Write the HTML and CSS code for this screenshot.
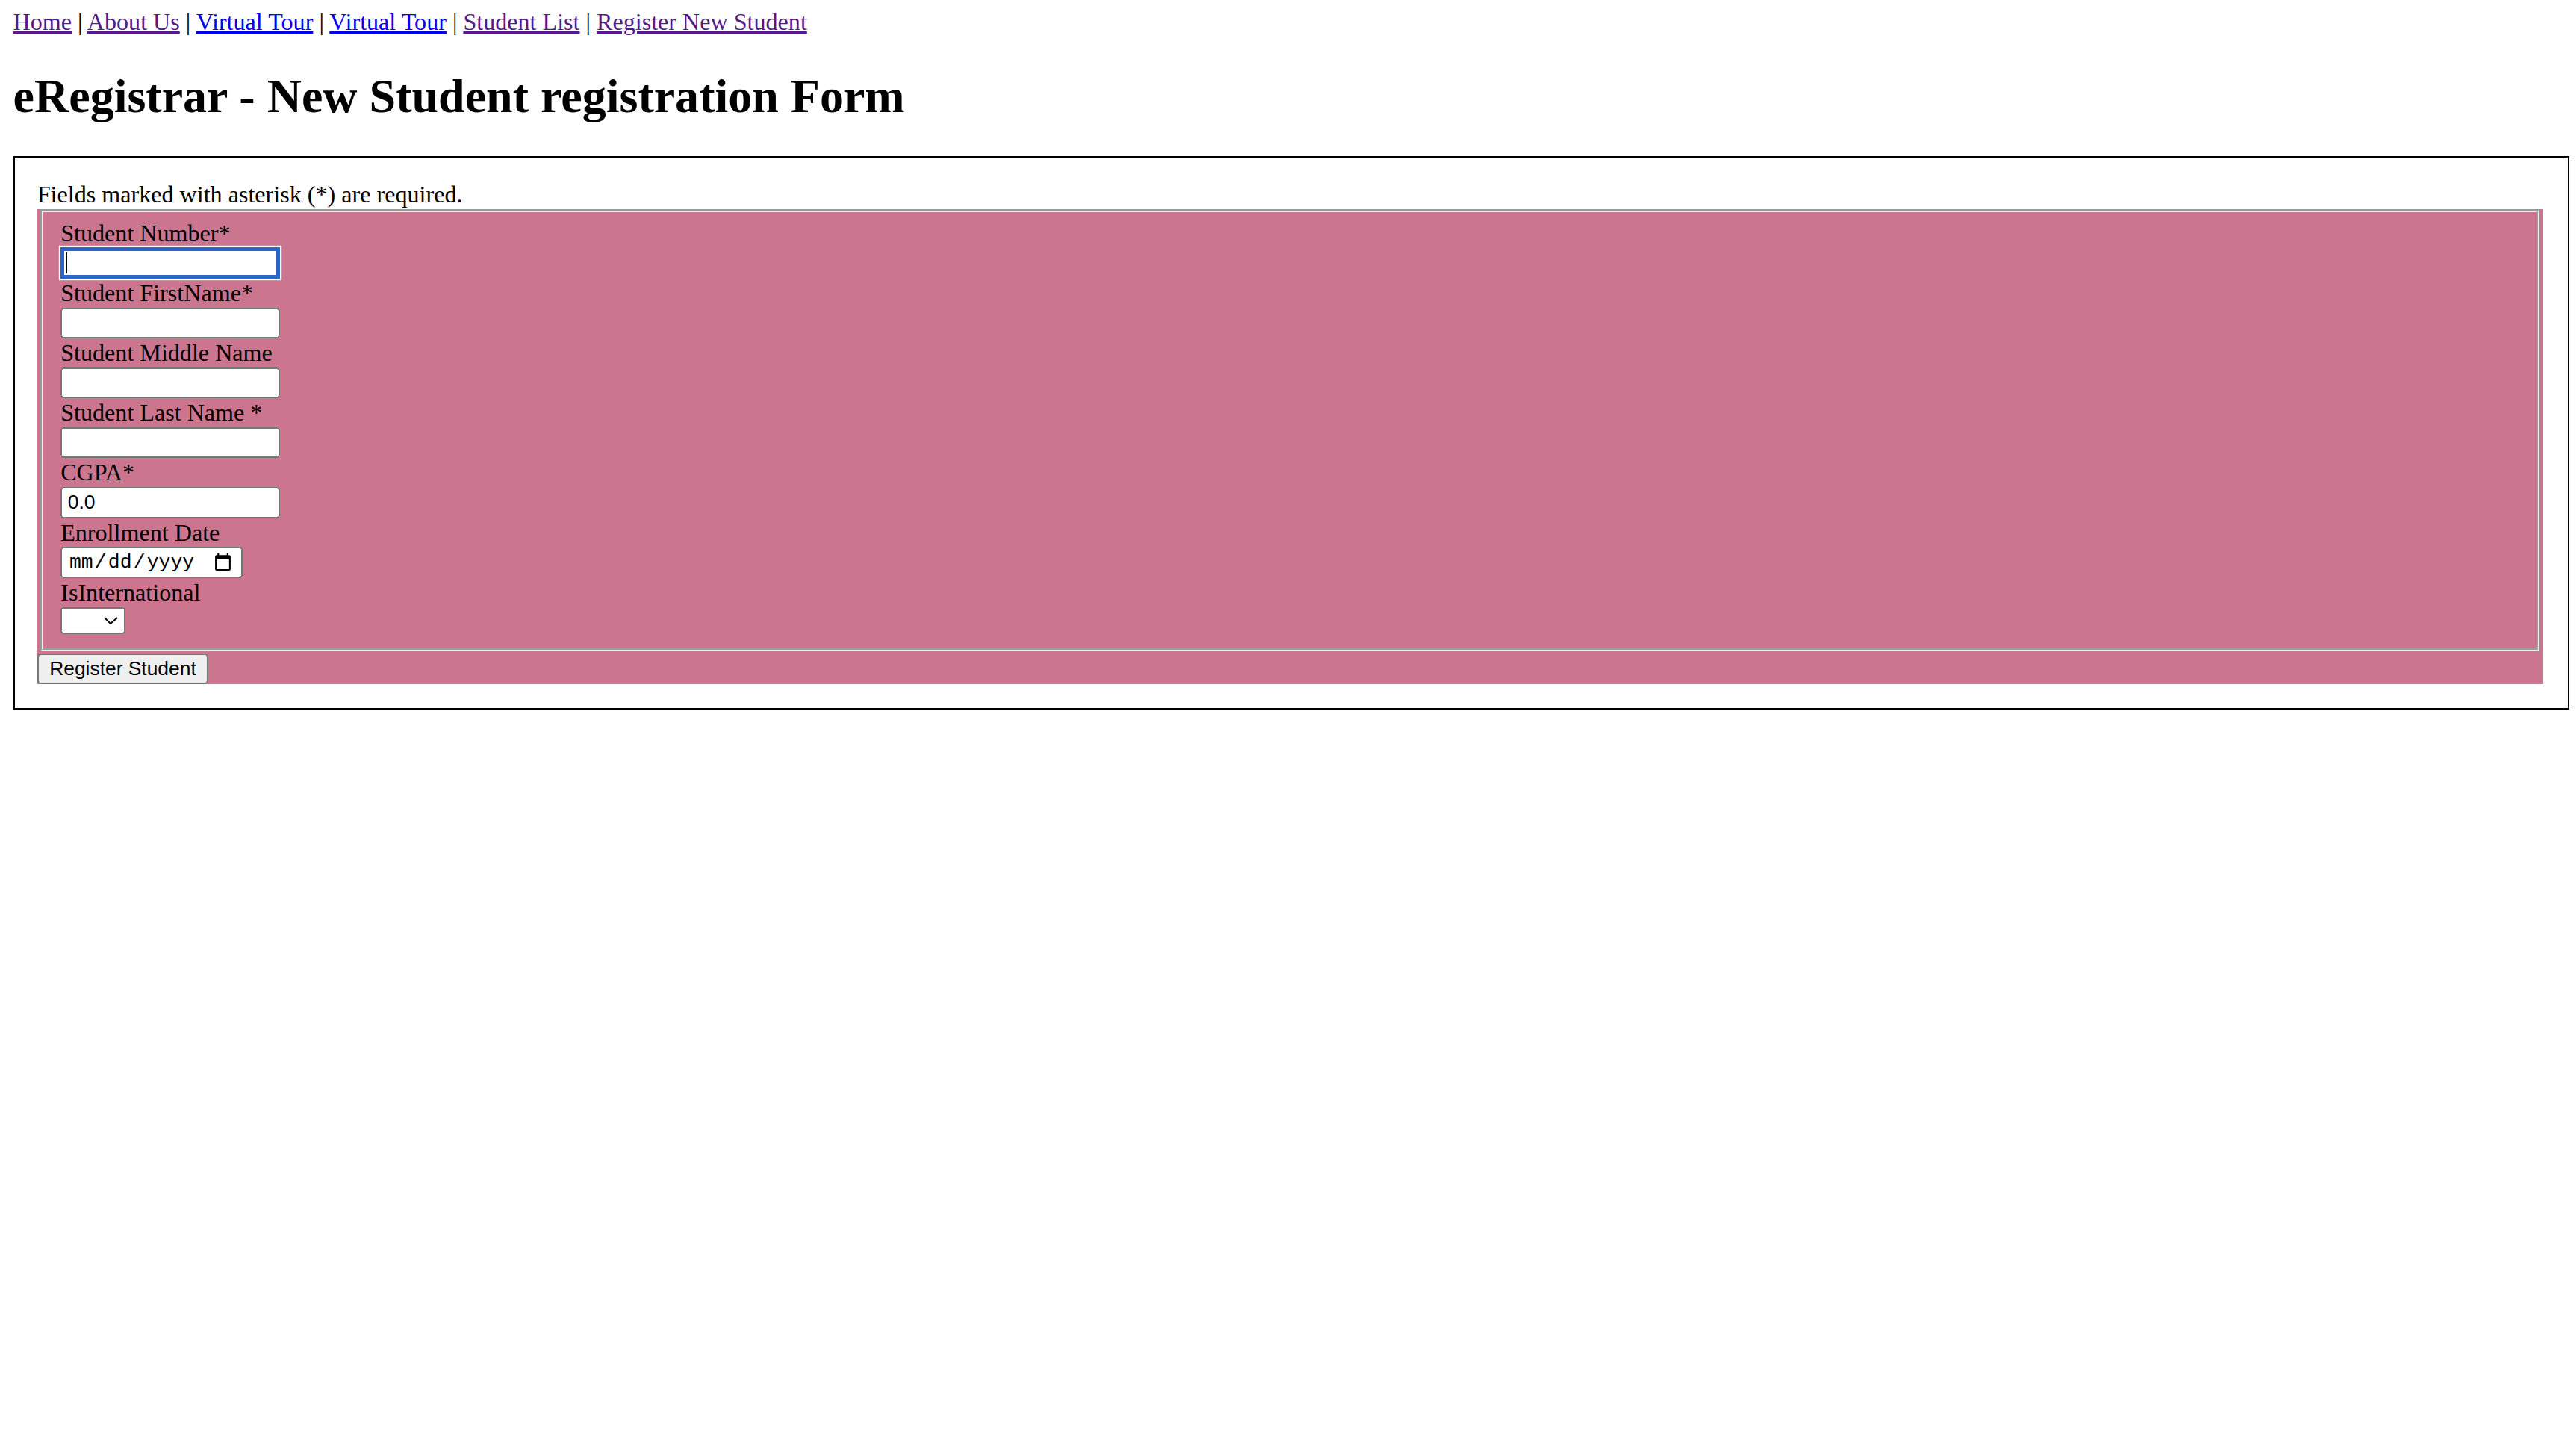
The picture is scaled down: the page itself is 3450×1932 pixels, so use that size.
FILE: index.html
```html
<!DOCTYPE html>
<html lang="en">
<head>
<meta charset="utf-8">
<title>eRegistrar - New Student registration Form</title>
<link rel="stylesheet" href="styles.css">
</head>
<body>
<nav class="topnav"><a class="nav-link nav-link--visited" href="#home">Home</a> | <a class="nav-link nav-link--visited" href="#about">About Us</a> | <a class="nav-link" href="#tour1">Virtual Tour</a> | <a class="nav-link" href="#tour2">Virtual Tour</a> | <a class="nav-link nav-link--visited" href="#list">Student List</a> | <a class="nav-link nav-link--visited" href="#register">Register New Student</a></nav>
<h1 class="page-title">eRegistrar - New Student registration Form</h1>
<form class="reg-form" action="#">
  <p class="form-note">Fields marked with asterisk (*) are required.</p>
  <div class="form-panel">
    <fieldset class="field-group">
      <label class="field-label" for="studentNumber">Student Number*</label>
      <span class="focus-wrap"><input class="text-input is-focused" id="studentNumber" type="text"><span class="caret"></span></span>
      <label class="field-label" for="firstName">Student FirstName*</label>
      <input class="text-input" id="firstName" type="text">
      <label class="field-label" for="middleName">Student Middle Name</label>
      <input class="text-input" id="middleName" type="text">
      <label class="field-label" for="lastName">Student Last Name *</label>
      <input class="text-input" id="lastName" type="text">
      <label class="field-label" for="cgpa">CGPA*</label>
      <input class="text-input" id="cgpa" type="text" value="0.0">
      <label class="field-label" for="enrollDate">Enrollment Date</label>
      <input class="date-input" id="enrollDate" type="date">
      <label class="field-label" for="isIntl">IsInternational</label>
      <select class="select-input" id="isIntl">
        <option value=""></option>
        <option value="true">Yes</option>
        <option value="false">No</option>
      </select>
    </fieldset>
    <button class="submit-btn" type="button">Register Student</button>
  </div>
</form>
</body>
</html>
```
FILE: styles.css
```css
html {
  zoom: 2.2;
}

body {
  margin: 0;
  padding: 4.6px 4px 8px 8px;
  font-family: "Liberation Serif", "Times New Roman", serif;
  font-size: 14.6px;
  color: #000;
  background: #fff;
}

.topnav {
  line-height: 18px;
}

.nav-link {
  color: #0000ee;
  text-decoration: underline;
}

.nav-link--visited {
  color: #551a8b;
}

.page-title {
  margin: 17.4px 0 18.1px;
  font-size: 29.1px;
  font-weight: bold;
  line-height: 37px;
}

.reg-form {
  border: 1px solid #000;
  padding: 13.2px 15.2px 14.7px 13.7px;
}

.form-note {
  margin: 0;
  padding-top: 0.5px;
  line-height: 17.5px;
}

.form-panel {
  background: #cc758f;
}

.field-group {
  margin: 0 2px;
  padding: 4px 12px 8.6px 10.5px;
  min-width: 0;
}

.field-label {
  display: block;
  line-height: 17.65px;
}

.focus-wrap {
  display: block;
  position: relative;
  width: fit-content;
}

.text-input {
  display: block;
  box-sizing: border-box;
  width: 133.6px;
  height: 18.8px;
  margin: 0;
  padding: 1px 2.5px;
  font: 12px "Liberation Sans", Arial, sans-serif;
  color: #000;
}

.text-input.is-focused {
  outline: 2.3px solid #2e63c8;
  outline-offset: -2.3px;
  box-shadow: 0 0 0 1px #fff;
}

.caret {
  position: absolute;
  left: 3.6px;
  top: 2.8px;
  width: 0.5px;
  height: 13px;
  background: #000;
}

.date-input {
  display: block;
  box-sizing: border-box;
  width: 111px;
  height: 18.8px;
  margin: 0;
  padding: 1px 2.5px;
  font: 12px "Liberation Mono", "Courier New", monospace;
  color: #000;
}

.select-input {
  display: block;
  box-sizing: border-box;
  width: 39.4px;
  height: 16.4px;
  margin: 0;
  font: 12px "Liberation Sans", Arial, sans-serif;
}

.submit-btn {
  display: block;
  box-sizing: border-box;
  width: 104.3px;
  height: 18.8px;
  margin: 1.4px 0 0;
  padding: 0;
  font: 12px "Liberation Sans", Arial, sans-serif;
  color: #000;
}
```
